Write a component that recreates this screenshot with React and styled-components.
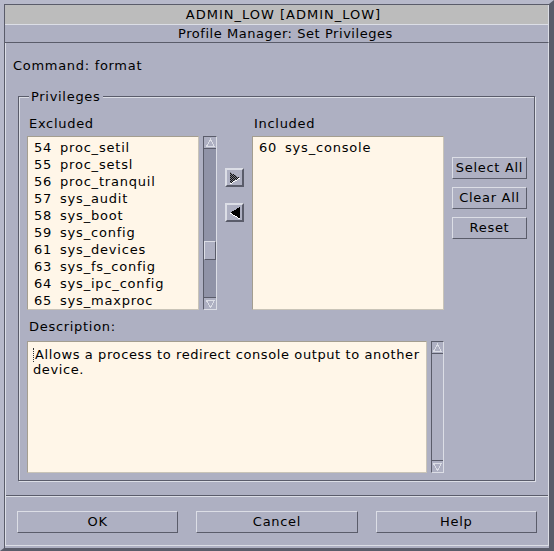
import React from "react";
import styled, { createGlobalStyle } from "styled-components";

const panel = "#aeb0c2";
const dark = "#5a5c6a";
const light = "#dcdee6";
const field = "#fff6e8";

const GlobalStyle = createGlobalStyle`
  body {
    margin: 0;
    background: ${panel};
    font-family: "DejaVu Sans", "Liberation Sans", sans-serif;
    font-size: 13px;
    letter-spacing: 0.7px;
    color: #000;
  }
`;

const excluded = [
  ["54", "proc_setil"],
  ["55", "proc_setsl"],
  ["56", "proc_tranquil"],
  ["57", "sys_audit"],
  ["58", "sys_boot"],
  ["59", "sys_config"],
  ["61", "sys_devices"],
  ["63", "sys_fs_config"],
  ["64", "sys_ipc_config"],
  ["65", "sys_maxproc"],
];

const included = [["60", "sys_console"]];

function ScrollArrow({ up }) {
  return (
    <svg width="11" height="10" viewBox="0 0 11 10" shapeRendering="crispEdges">
      {up ? (
        <polygon points="1.5,8.5 5.5,1.5 9.5,8.5" fill="none" stroke={light} />
      ) : (
        <polygon points="1.5,1.5 5.5,8.5 9.5,1.5" fill="none" stroke={light} />
      )}
    </svg>
  );
}

function MoveRightIcon() {
  return (
    <svg width="12" height="12" viewBox="0 0 12 12" shapeRendering="crispEdges">
      <defs>
        <pattern id="stip" width="2" height="2" patternUnits="userSpaceOnUse">
          <rect width="2" height="2" fill="#7a7c8a" />
          <rect width="1" height="1" fill="#111" />
          <rect x="1" y="1" width="1" height="1" fill="#111" />
        </pattern>
      </defs>
      <polygon points="1,0 11,6 1,12" fill="url(#stip)" />
      <polyline points="1,12 11,6" fill="none" stroke="#fff" />
    </svg>
  );
}

function MoveLeftIcon() {
  return (
    <svg width="12" height="12" viewBox="0 0 12 12" shapeRendering="crispEdges">
      <polygon points="11,0 1,6 11,12" fill="#000" />
      <polyline points="1,6 11,12" fill="none" stroke="#fff" />
    </svg>
  );
}

function Scrollbar({ width, thumbTop, trough }) {
  return (
    <ScrollTrack $width={width} $trough={trough}>
      <ArrowCell $top>
        <ScrollArrow up />
      </ArrowCell>
      <Trough $offset={thumbTop}>{thumbTop != null && <Thumb />}</Trough>
      <ArrowCell>
        <ScrollArrow />
      </ArrowCell>
    </ScrollTrack>
  );
}

function PrivList({ items }) {
  return (
    <ListBox>
      {items.map(([num, name]) => (
        <Row key={num}>
          <Num>{num}</Num>
          <span>{name}</span>
        </Row>
      ))}
    </ListBox>
  );
}

export default function App() {
  return (
    <>
      <GlobalStyle />
      <Window>
        <Frame>
          <TitleBar>ADMIN_LOW [ADMIN_LOW]</TitleBar>
          <SubTitle>Profile Manager: Set Privileges</SubTitle>
          <Body>
            <CommandLine>Command: format</CommandLine>
            <Group>
              <Legend>Privileges</Legend>
              <PrivGrid>
                <Label>Excluded</Label>
                <span />
                <Label>Included</Label>
                <span />

                <ListWithBar>
                  <PrivList items={excluded} />
                  <Scrollbar width={14} thumbTop={92} trough="#9093a7" />
                </ListWithBar>
                <ShiftColumn>
                  <ShiftButton>
                    <MoveRightIcon />
                  </ShiftButton>
                  <ShiftButton>
                    <MoveLeftIcon />
                  </ShiftButton>
                </ShiftColumn>
                <PrivList items={included} />
                <SideButtons>
                  <PushButton>Select All</PushButton>
                  <PushButton>Clear All</PushButton>
                  <PushButton>Reset</PushButton>
                </SideButtons>
              </PrivGrid>

              <DescLabel>Description:</DescLabel>
              <DescRow>
                <TextBox>
                  <Caret />
                  Allows a process to redirect console output to another device.
                </TextBox>
                <Scrollbar width={13} trough={panel} />
              </DescRow>
            </Group>
            <Separator />
            <ButtonRow>
              <PushButton $wide>OK</PushButton>
              <PushButton $wide>Cancel</PushButton>
              <PushButton $wide>Help</PushButton>
            </ButtonRow>
          </Body>
        </Frame>
      </Window>
    </>
  );
}

const Window = styled.div`
  box-sizing: border-box;
  width: 554px;
  height: 551px;
  display: flex;
  flex-direction: column;
  background: ${panel};
  border-style: solid;
  border-width: 4px 5px 3px 4px;
  border-color: #b7b9ca ${dark} ${dark} #b7b9ca;
`;

const Frame = styled.div`
  flex: 1;
  display: flex;
  flex-direction: column;
  border-top: 1px solid ${dark};
  border-left: 1px solid ${dark};
  padding-bottom: 2px;
`;

const TitleBar = styled.div`
  height: 19px;
  line-height: 19px;
  padding-left: 14px;
  text-align: center;
  letter-spacing: 1px;
  background: #bcbcbc;
  border-bottom: 1px solid ${light};
  border-right: 1px solid ${light};
`;

const SubTitle = styled.div`
  height: 17px;
  line-height: 17px;
  padding-left: 18px;
  text-align: center;
  letter-spacing: 0.55px;
  border-bottom: 1px solid ${dark};
  border-right: 1px solid ${light};
`;

const Body = styled.div`
  flex: 1;
  display: flex;
  flex-direction: column;
  padding-top: 15px;
  border: 1px solid ${light};
  border-top: none;
`;

const CommandLine = styled.div`
  padding-left: 7px;
  line-height: 16px;
`;

const Group = styled.div`
  position: relative;
  box-sizing: border-box;
  width: 517px;
  margin: 22px 0 0 12px;
  padding: 19px 7px 7px 8px;
  border: 1px solid ${dark};
  box-shadow: inset 1px 1px 0 ${light}, 1px 1px 0 ${light};
`;

const Legend = styled.div`
  position: absolute;
  top: -8px;
  left: 10px;
  padding: 0 2px;
  line-height: 16px;
  background: ${panel};
`;

const PrivGrid = styled.div`
  display: grid;
  grid-template-columns: 190px 19px 192px 75px;
  column-gap: 8px;
  row-gap: 4px;
`;

const Label = styled.div`
  line-height: 16px;
  padding-left: 2px;
`;

const ListWithBar = styled.div`
  display: flex;
  gap: 4px;
  > :first-child {
    flex: 1;
  }
`;

const ListBox = styled.div`
  box-sizing: border-box;
  height: 174px;
  padding: 2px 0 0 6px;
  letter-spacing: 0.8px;
  background: ${field};
  border: 1px solid #a49e90;
  border-right-color: #c9c4b8;
  border-bottom-color: #c9c4b8;
  overflow: hidden;
`;

const Row = styled.div`
  display: flex;
  height: 17px;
  line-height: 17px;
  white-space: nowrap;
`;

const Num = styled.span`
  width: 26px;
  flex: none;
`;

const ScrollTrack = styled.div`
  box-sizing: border-box;
  width: ${(p) => p.$width}px;
  display: flex;
  flex-direction: column;
  background: ${(p) => p.$trough};
  border: 1px solid ${dark};
  border-right-color: ${light};
  border-bottom-color: ${light};
`;

const ArrowCell = styled.div`
  height: 11px;
  display: flex;
  align-items: center;
  justify-content: center;
  background: ${panel};
  ${(p) =>
    p.$top
      ? `border-bottom: 1px solid ${dark};`
      : `border-top: 1px solid ${dark};`}
`;

const Trough = styled.div`
  flex: 1;
  padding-top: ${(p) => p.$offset || 0}px;
`;

const Thumb = styled.div`
  box-sizing: border-box;
  height: 19px;
  background: ${panel};
  border: 1px solid ${light};
  border-right-color: ${dark};
  border-bottom-color: ${dark};
`;

const ShiftColumn = styled.div`
  display: flex;
  flex-direction: column;
  gap: 16px;
  padding-top: 32px;
`;

const ShiftButton = styled.div`
  box-sizing: border-box;
  width: 19px;
  height: 19px;
  display: flex;
  align-items: center;
  justify-content: center;
  background: ${panel};
  border: 2px solid ${light};
  border-right-color: ${dark};
  border-bottom-color: ${dark};
`;

const SideButtons = styled.div`
  display: flex;
  flex-direction: column;
  gap: 8px;
  padding-top: 21px;
`;

const PushButton = styled.div`
  box-sizing: border-box;
  height: 22px;
  line-height: 20px;
  text-align: center;
  white-space: nowrap;
  background: ${panel};
  border: 1px solid ${light};
  border-right-color: ${dark};
  border-bottom-color: ${dark};
  width: ${(p) => (p.$wide ? "auto" : "75px")};
`;

const DescLabel = styled.div`
  margin-top: 9px;
  padding-left: 2px;
  line-height: 16px;
`;

const DescRow = styled.div`
  display: flex;
  gap: 4px;
  margin-top: 6px;
  height: 132px;
`;

const TextBox = styled.div`
  box-sizing: border-box;
  width: 400px;
  padding: 5px 6px 0 5px;
  line-height: 15px;
  letter-spacing: 0.6px;
  background: ${field};
  border: 1px solid #a49e90;
  border-right-color: #c9c4b8;
  border-bottom-color: #c9c4b8;
`;

const Caret = styled.span`
  display: inline-block;
  width: 0;
  height: 14px;
  margin: 0 1px -3px 0;
  border-left: 1px dotted #333;
`;

const Separator = styled.div`
  margin-top: 14px;
  border-top: 1px solid ${dark};
  border-bottom: 1px solid ${light};
`;

const ButtonRow = styled.div`
  display: grid;
  grid-template-columns: repeat(3, 1fr);
  gap: 18px;
  margin-top: 14px;
  padding: 0 11px;
`;
